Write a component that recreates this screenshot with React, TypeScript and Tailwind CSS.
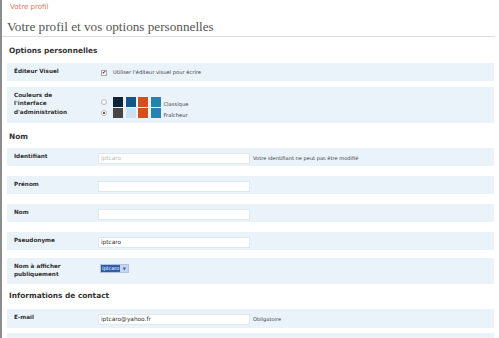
import React from "react";

const font = { fontFamily: '"DejaVu Sans", Verdana, sans-serif' };

function Row({ label, children, className = "" }: { label: React.ReactNode; children?: React.ReactNode; className?: string }) {
  return (
    <div className={`flex bg-[#eaf2fa] w-[487px] ${className}`}>
      <div className="w-[91px] shrink-0 pl-[7px] pt-[4px] text-[5.7px] font-bold leading-[8.3px] text-[#2f2f2f]">{label}</div>
      <div className="flex-1 flex items-start pt-[5px]">{children}</div>
    </div>
  );
}

function Input({ value = "", disabled = false, note }: { value?: string; disabled?: boolean; note?: string }) {
  return (
    <div className="flex items-center">
      <div className={`w-[152px] h-[11px] bg-white border border-[#e2e7ec] flex items-center pl-[2px] text-[5.8px] ${disabled ? "text-[#bbb]" : "text-[#333]"}`}>{value}</div>
      {note && <span className="ml-[3px] text-[5.1px] text-[#444]">{note}</span>}
    </div>
  );
}

function Swatch({ c }: { c: string }) {
  return <div className={`w-[10px] h-[10px] ${c}`} />;
}

export default function App() {
  return (
    <div className="w-[499px] h-[338px] overflow-hidden bg-white flex" style={font}>
      <div className="w-[2px] bg-[#8c8c8c] shrink-0" />
      <div className="flex-1 flex flex-col">
        <div className="pl-[8px] pt-[3px] text-[7px] leading-[8px] text-[#d9775b]">Votre profil</div>
        <div className="w-[493px] border-b border-[#dcdcdc] pl-[5px] pt-[8px] pb-[1px] text-[13.2px] leading-[16px] text-[#555]" style={{ fontFamily: '"Liberation Serif", "Times New Roman", serif' }}>
          Votre profil et vos options personnelles
        </div>
        <div className="pl-[5px] flex flex-col">
          <div className="pl-[2px] mt-[7px] h-[14px] text-[7.4px] font-bold leading-[14px] text-[#333]">Options personnelles</div>
          <Row label="Éditeur Visuel" className="mt-[5px] h-[18px]">
            <div className="flex items-center mt-[1px]">
              <div className="w-[6px] h-[6px] border border-[#aaa] bg-white flex items-center justify-center text-[5px] leading-none text-[#222] ml-[3px]">✔</div>
              <span className="ml-[6px] text-[5.2px] text-[#444]">Utiliser l'éditeur visuel pour écrire</span>
            </div>
          </Row>
          <Row label={<>Couleurs de<br />l'interface<br />d'administration</>} className="mt-[6px] h-[36px]">
            <div className="flex flex-col gap-[1px] ml-[3px] mt-[5px]">
              <div className="flex items-center h-[10px]">
                <div className="w-[6px] h-[6px] rounded-full border border-[#bbb] bg-white" />
                <div className="flex gap-[2.5px] ml-[6px]">
                  <Swatch c="bg-[#0b2438]" />
                  <Swatch c="bg-[#14568a]" />
                  <Swatch c="bg-[#d54e21]" />
                  <Swatch c="bg-[#2683ae]" />
                </div>
                <span className="ml-[3px] self-end leading-[6px] text-[5.2px] text-[#444]">Classique</span>
              </div>
              <div className="flex items-center h-[10px]">
                <div className="w-[6px] h-[6px] rounded-full border border-[#bbb] bg-white flex items-center justify-center">
                  <div className="w-[2px] h-[2px] rounded-full bg-[#333]" />
                </div>
                <div className="flex gap-[2.5px] ml-[6px]">
                  <Swatch c="bg-[#464646]" />
                  <Swatch c="bg-[#cee1ef]" />
                  <Swatch c="bg-[#d54e21]" />
                  <Swatch c="bg-[#2683ae]" />
                </div>
                <span className="ml-[3px] self-end leading-[6px] text-[5.2px] text-[#444]">Fraîcheur</span>
              </div>
            </div>
          </Row>
          <div className="pl-[2px] mt-[7px] h-[14px] text-[7.4px] font-bold leading-[14px] text-[#333]">Nom</div>
          <Row label="Identifiant" className="mt-[4px] h-[18px]">
            <Input value="iptcaro" disabled note="Votre identifiant ne peut pas être modifié" />
          </Row>
          <Row label="Prénom" className="mt-[10px] h-[18px]">
            <Input />
          </Row>
          <Row label="Nom" className="mt-[10px] h-[18px]">
            <Input />
          </Row>
          <Row label="Pseudonyme" className="mt-[10px] h-[18px]">
            <Input value="iptcaro" />
          </Row>
          <Row label={<>Nom à afficher<br />publiquement</>} className="mt-[8px] h-[26px]">
            <div className="flex items-center ml-[2px] mt-[1px] h-[9px] border border-[#b5c3d8] bg-[#dfe8f5]">
              <span className="bg-[#2d5fae] text-white text-[5px] leading-[7px] px-[1px] h-[7px]">iptcaro</span>
              <div className="w-[8px] h-[7px] bg-[#c6d6ef] flex items-center justify-center text-[4px] text-[#3a5a9a]">▼</div>
            </div>
          </Row>
          <div className="pl-[2px] mt-[5px] h-[14px] text-[7.4px] font-bold leading-[14px] text-[#333]">Informations de contact</div>
          <Row label="E-mail" className="mt-[6px] h-[19px]">
            <Input value="iptcaro@yahoo.fr" note="Obligatoire" />
          </Row>
          <Row label="" className="mt-[5px] h-[18px]" />
        </div>
      </div>
    </div>
  );
}
